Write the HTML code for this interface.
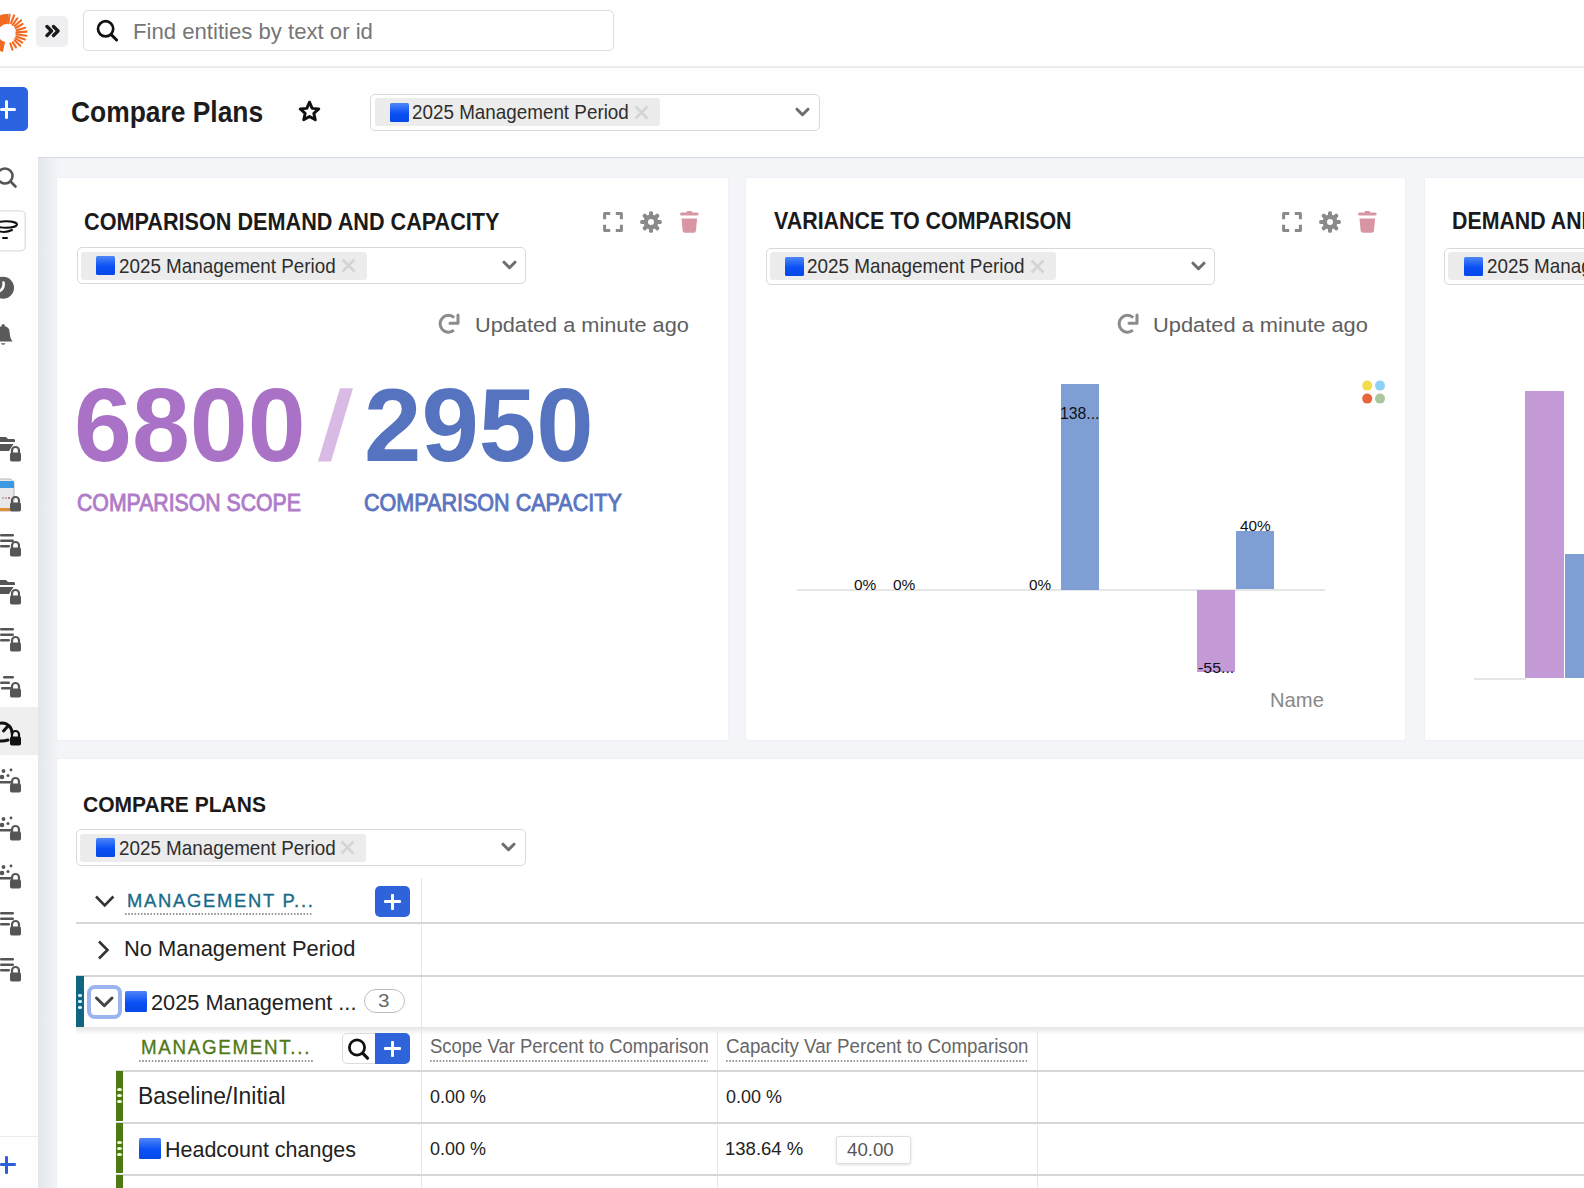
<!DOCTYPE html>
<html><head><meta charset="utf-8">
<style>
*{box-sizing:border-box;margin:0;padding:0}
html,body{width:1584px;height:1188px;overflow:hidden;background:#fefefe;font-family:"Liberation Sans",sans-serif;color:#222;position:relative}
.abs{position:absolute}
.t{position:absolute;white-space:nowrap;line-height:1;transform-origin:0 0;z-index:5}
#texts{position:absolute;left:0;top:0;width:1584px;height:1188px;z-index:5}
#topbar{position:absolute;left:0;top:0;width:1584px;height:68px;border-bottom:2px solid #ececec;background:#fefefe}
#side{position:absolute;left:0;top:68px;width:38px;height:1120px;background:#fefefe}
#content{position:absolute;left:38px;top:157px;width:1546px;height:1031px;background:#f4f5f9;border-top:1px solid #d3d9e1;overflow:hidden}
#content:before{content:"";position:absolute;left:0;top:0;width:19px;height:100%;background:linear-gradient(to right,#e3e7eb,#f2f3f7)}
.card{position:absolute;background:#fff;border-radius:2px;box-shadow:0 0 2px rgba(200,205,215,0.35)}
.dd{position:absolute;border:1.5px solid #d9d9d9;border-radius:5px;background:#fff}
.tag{position:absolute;background:#ececec;border-radius:3px}
.sq{position:absolute;width:19px;height:19px;background:linear-gradient(#4f86f7,#0a50f5 55%,#0648e8);border-radius:1.5px}
.hline{position:absolute;height:2px;background:#d6d6d6}
.vline{position:absolute;width:1px;background:#e6e6e6}

</style></head><body>
<div id="topbar"></div>
<!-- logo -->
<svg class="abs" style="left:0;top:0" width="30" height="60" viewBox="0 0 30 60">
  <g fill="none" stroke="#f26a21">
  <path d="M-7 33 A14 14 0 0 1 8 19" stroke-width="10"/>
  <path d="M-7 33 A14 14 0 0 0 4 47" stroke-width="10"/>
  <g stroke-width="2.1" stroke-linecap="round"><line x1="8.39" y1="23.10" x2="9.57" y2="14.68"/><line x1="10.93" y1="23.26" x2="14.12" y2="15.38"/><line x1="12.74" y1="24.81" x2="17.32" y2="18.26"/><line x1="14.80" y1="25.97" x2="21.12" y2="20.29"/><line x1="15.66" y1="28.00" x2="22.59" y2="24.00"/><line x1="16.61" y1="30.24" x2="25.26" y2="27.76"/><line x1="16.48" y1="32.34" x2="26.45" y2="31.64"/><line x1="16.41" y1="34.32" x2="26.31" y2="35.71"/><line x1="16.40" y1="36.42" x2="24.85" y2="39.50"/><line x1="15.48" y1="38.30" x2="22.26" y2="42.54"/><line x1="14.55" y1="40.29" x2="20.31" y2="45.85"/><line x1="12.83" y1="42.33" x2="16.01" y2="47.42"/><line x1="10.40" y1="43.46" x2="12.41" y2="49.64"/></g>
  </g>
</svg>
<div class="abs" style="left:36px;top:16px;width:32px;height:31px;background:#efeff1;border-radius:5px"></div>
<svg class="abs" style="left:45px;top:24px" width="16" height="14" viewBox="0 0 16 14">
  <path d="M2 2.5 L6.5 7 L2 11.5 M8.5 2.5 L13 7 L8.5 11.5" fill="none" stroke="#1a1a1a" stroke-width="3.3" stroke-linecap="round" stroke-linejoin="round"/>
</svg>
<div class="abs" style="left:83px;top:10px;width:531px;height:41px;border:1.5px solid #dcdcdc;border-radius:5px;background:#fff"></div>
<svg class="abs" style="left:95px;top:18px" width="26" height="26" viewBox="0 0 26 26">
  <circle cx="10.6" cy="10.8" r="7.6" fill="none" stroke="#111" stroke-width="2.7"/>
  <line x1="16.2" y1="16.6" x2="21.6" y2="22" stroke="#111" stroke-width="3" stroke-linecap="round"/>
</svg>

<!-- sidebar -->
<div id="side"></div>
<div class="abs" style="left:0;top:87px;width:28.3px;height:43.8px;background:#2a64e0;border-radius:0 5px 5px 0"></div>
<div class="abs" style="left:4.8px;top:99.7px;width:3px;height:19px;background:#fff;border-radius:1.5px"></div>
<div class="abs" style="left:0;top:107.5px;width:15.7px;height:3px;background:#fff;border-radius:1.5px"></div>
<svg class="abs" style="left:0;top:160px" width="38" height="880" viewBox="0 0 38 880">
  <g fill="none" stroke="#555" stroke-width="2.6" stroke-linecap="round">
    <!-- search -->
    <circle cx="5" cy="16" r="7.5"/>
    <line x1="10.5" y1="21.5" x2="15.5" y2="26.5"/>
  </g>
  <!-- tornado box -->
  <rect x="-6" y="50.8" width="31.3" height="40" rx="4.5" fill="none" stroke="#dedede" stroke-width="1.3"/>
  <g fill="none" stroke="#111" stroke-width="2" stroke-linecap="round">
    <ellipse cx="6" cy="64.5" rx="11" ry="3.2"/>
    <path d="M-3 70.5 Q5 73.5 12 70"/>
    <path d="M3 78 H7"/>
  </g>
  <!-- clock -->
  <circle cx="3" cy="127.7" r="11" fill="#5a5a5a"/>
  <path d="M3.5 122.5 Q4.5 128 0 131" fill="none" stroke="#fff" stroke-width="2.5" stroke-linecap="round"/>
  <!-- bell -->
  <path d="M-6.3 181.6 Q-3.5 178.5 -3.2 172 Q-3 166.5 3.2 166 Q9.4 166.5 9.6 172 Q9.9 178.5 12.6 181.6 Z" fill="#5a5a5a"/>
  <circle cx="3.2" cy="165.6" r="1.6" fill="#5a5a5a"/>
  <path d="M0.8 183.2 H5.6 Q3.2 186.5 0.8 183.2 Z" fill="#5a5a5a"/>
</svg>
<!-- locked icons -->
<svg class="abs" style="left:0;top:420px" width="38" height="580" viewBox="0 0 38 580">
  <defs>
    <g id="lock"><path d="M-3.5 0 V-2.5 A3.5 3.5 0 0 1 3.5 -2.5 V0" fill="none" stroke="#555" stroke-width="2.2"/><rect x="-5.5" y="-0.5" width="11" height="9" rx="1.8" fill="#555"/></g>
    <g id="folder"><path d="M0 0 H6 L8 2 H14 Q15 2 15 3.5 V5 H0 Z M0 7 H13.5 L9 14 H0 Z" fill="#555"/></g>
    <g id="list"><rect x="0" y="0" width="14" height="2.6" rx="1.3" fill="#555"/><rect x="0" y="5.5" width="14" height="2.6" rx="1.3" fill="#555"/><rect x="0" y="11" width="10" height="2.6" rx="1.3" fill="#555"/></g>
    <g id="scatter"><circle cx="3" cy="2" r="2" fill="#555"/><circle cx="11" cy="1.2" r="1.6" fill="#555"/><circle cx="1.5" cy="8" r="2.4" fill="#555"/><circle cx="7.5" cy="6.5" r="1.6" fill="#555"/><rect x="0" y="12" width="14" height="2.4" rx="1.2" fill="#555"/></g>
  </defs>
  <use href="#folder" x="0" y="17"/><use href="#lock" x="15.5" y="33"/>
  <!-- calendar emoji -->
  <rect x="-4" y="59" width="18" height="32" rx="5" fill="#e8e8ea" stroke="#b8b8bc" stroke-width="1"/>
  <rect x="-4" y="61" width="18" height="7" fill="#3d9ae0"/>
  <rect x="-4" y="88" width="18" height="3" fill="#e09030"/>
  <circle cx="3" cy="78" r="0.8" fill="#777"/><circle cx="6" cy="78" r="0.8" fill="#777"/><circle cx="9" cy="78" r="0.9" fill="#c33"/>
  <use href="#lock" x="15.5" y="83"/>
  <use href="#list" x="0" y="114"/><use href="#lock" x="15.5" y="128"/>
  <use href="#folder" x="0" y="160"/><use href="#lock" x="15.5" y="176"/>
  <use href="#list" x="0" y="208"/><use href="#lock" x="15.5" y="223"/>
  <g transform="translate(1 256)"><rect x="2" y="0" width="11" height="2.6" rx="1.3" fill="#555"/><rect x="-1" y="5.5" width="10" height="2.6" rx="1.3" fill="#555"/><rect x="0" y="11" width="11" height="2.6" rx="1.3" fill="#555"/></g><use href="#lock" x="15.5" y="269"/>
</svg>
<div class="abs" style="left:0;top:706.7px;width:38px;height:48px;background:#efeff0"></div>
<svg class="abs" style="left:0;top:700px" width="38" height="300" viewBox="0 0 38 300">
  <defs>
    <g id="lock2"><path d="M-3.5 0 V-2.5 A3.5 3.5 0 0 1 3.5 -2.5 V0" fill="none" stroke="#555" stroke-width="2.2"/><rect x="-5.5" y="-0.5" width="11" height="9" rx="1.8" fill="#555"/></g>
    <g id="scat"><circle cx="3.5" cy="2" r="1.9" fill="#555"/><circle cx="11" cy="1" r="1.4" fill="#555"/><circle cx="2" cy="8" r="2.3" fill="#555"/><circle cx="8" cy="6.5" r="1.5" fill="#555"/><rect x="-2" y="12" width="14" height="2.4" rx="1.2" fill="#555"/></g>
    <g id="lst"><rect x="0" y="0" width="14" height="2.6" rx="1.3" fill="#555"/><rect x="0" y="5.5" width="14" height="2.6" rx="1.3" fill="#555"/><rect x="0" y="11" width="10" height="2.6" rx="1.3" fill="#555"/></g>
  </defs>
  <!-- gauge -->
  <path d="M-8 36 A 10 10 0 1 1 12 36" fill="none" stroke="#111" stroke-width="3" stroke-linecap="round" transform="translate(0 -3)"/>
  <path d="M-4 40 Q2 42 8 40" fill="none" stroke="#111" stroke-width="3" stroke-linecap="round"/>
  <path d="M3.5 31 L8 26" stroke="#111" stroke-width="3" stroke-linecap="round"/>
  <g><path d="M-3.5 0 V-2.5 A3.5 3.5 0 0 1 3.5 -2.5 V0" fill="none" stroke="#111" stroke-width="2.2" transform="translate(15.5 37)"/><rect x="10" y="36.5" width="11" height="9" rx="1.8" fill="#111"/></g>
  <use href="#scat" x="0" y="69"/><use href="#lock2" x="15.5" y="84"/>
  <use href="#scat" x="0" y="117"/><use href="#lock2" x="15.5" y="132"/>
  <use href="#scat" x="0" y="165"/><use href="#lock2" x="15.5" y="180"/>
  <use href="#lst" x="0" y="212"/><use href="#lock2" x="15.5" y="227"/>
  <use href="#lst" x="0" y="258"/><use href="#lock2" x="15.5" y="273"/>
</svg>
<div class="abs" style="left:0;top:1135.5px;width:38px;height:1.5px;background:#ececec"></div>
<div class="abs" style="left:5px;top:1155.5px;width:2.6px;height:18px;background:#2b5fd9;border-radius:1.3px"></div>
<div class="abs" style="left:0;top:1163px;width:15.5px;height:2.6px;background:#2b5fd9;border-radius:1.3px"></div>

<!-- header -->
<svg class="abs" style="left:298px;top:100px" width="24" height="24" viewBox="0 0 24 24">
  <path d="M11.5 2.2 L14.2 8.4 L20.8 8.9 L15.8 13.3 L17.3 19.8 L11.5 16.4 L5.7 19.8 L7.2 13.3 L2.2 8.9 L8.8 8.4 Z" fill="none" stroke="#111" stroke-width="2.9" stroke-linejoin="round"/>
</svg>
<div class="dd" style="left:370px;top:94px;width:450px;height:37px"></div>
<div class="tag" style="left:374.5px;top:98px;width:285.5px;height:28px"></div>
<div class="sq" style="left:389.7px;top:103px"></div>
<svg class="abs" style="left:633px;top:104px" width="17" height="17" viewBox="0 0 17 17"><path d="M2.5 2.5 L14.5 14.5 M14.5 2.5 L2.5 14.5" stroke="#d4d4d4" stroke-width="2.6"/></svg>
<svg class="abs" style="left:795px;top:107px" width="15" height="11" viewBox="0 0 15 11"><path d="M2 2.2 L7.5 7.7 L13 2.2" fill="none" stroke="#6e6e6e" stroke-width="3" stroke-linecap="round" stroke-linejoin="round"/></svg>

<!-- content -->
<div id="content"></div>
<div class="card" style="left:57px;top:178px;width:671px;height:562px"></div>
<div class="card" style="left:746px;top:178px;width:659px;height:562px"></div>
<div class="card" style="left:1425px;top:178px;width:170px;height:562px"></div>
<div class="card" style="left:57px;top:759px;width:1540px;height:440px"></div>

<!-- card content -->

<svg class="abs" style="left:603px;top:211.5px" width="20" height="20" viewBox="0 0 20 20"><path d="M1.6 7.2 V1.6 H7.2 M12.8 1.6 H18.4 V7.2 M18.4 12.8 V18.4 H12.8 M7.2 18.4 H1.6 V12.8" fill="none" stroke="#8a8a8a" stroke-width="3" stroke-linejoin="round"/></svg>
<svg class="abs" style="left:640px;top:210.5px" width="22" height="22" viewBox="0 0 22 22"><g fill="#8a8a8a"><circle cx="11" cy="11" r="7.4"/><rect x="9" y="0.2" width="4" height="6" rx="1.6" transform="rotate(0 11 11)"/><rect x="9" y="0.2" width="4" height="6" rx="1.6" transform="rotate(45 11 11)"/><rect x="9" y="0.2" width="4" height="6" rx="1.6" transform="rotate(90 11 11)"/><rect x="9" y="0.2" width="4" height="6" rx="1.6" transform="rotate(135 11 11)"/><rect x="9" y="0.2" width="4" height="6" rx="1.6" transform="rotate(180 11 11)"/><rect x="9" y="0.2" width="4" height="6" rx="1.6" transform="rotate(225 11 11)"/><rect x="9" y="0.2" width="4" height="6" rx="1.6" transform="rotate(270 11 11)"/><rect x="9" y="0.2" width="4" height="6" rx="1.6" transform="rotate(315 11 11)"/></g><circle cx="11" cy="11" r="3" fill="#fff"/></svg>
<svg class="abs" style="left:679.5px;top:210.5px" width="19" height="22" viewBox="0 0 19 22"><g fill="#d896a4"><rect x="0" y="1.6" width="18.6" height="3" rx="1.5"/><rect x="6.5" y="0" width="5.6" height="3" rx="1.2"/><path d="M1.5 7.5 H17.1 L16 19.5 Q15.8 21.8 13.5 21.8 H5.1 Q2.8 21.8 2.6 19.5 Z"/></g></svg>
<svg class="abs" style="left:436px;top:312px" width="24" height="24" viewBox="0 0 24 24"><path d="M18.2 5.6 A8.4 8.4 0 1 0 17.9 18.2" fill="none" stroke="#8c8c8c" stroke-width="3"/><path d="M14 11.2 H22 V3" fill="none" stroke="#8c8c8c" stroke-width="3" stroke-linecap="round" stroke-linejoin="round"/></svg>

<svg class="abs" style="left:1281.5px;top:211.5px" width="20" height="20" viewBox="0 0 20 20"><path d="M1.6 7.2 V1.6 H7.2 M12.8 1.6 H18.4 V7.2 M18.4 12.8 V18.4 H12.8 M7.2 18.4 H1.6 V12.8" fill="none" stroke="#8a8a8a" stroke-width="3" stroke-linejoin="round"/></svg>
<svg class="abs" style="left:1318.5px;top:210.5px" width="22" height="22" viewBox="0 0 22 22"><g fill="#8a8a8a"><circle cx="11" cy="11" r="7.4"/><rect x="9" y="0.2" width="4" height="6" rx="1.6" transform="rotate(0 11 11)"/><rect x="9" y="0.2" width="4" height="6" rx="1.6" transform="rotate(45 11 11)"/><rect x="9" y="0.2" width="4" height="6" rx="1.6" transform="rotate(90 11 11)"/><rect x="9" y="0.2" width="4" height="6" rx="1.6" transform="rotate(135 11 11)"/><rect x="9" y="0.2" width="4" height="6" rx="1.6" transform="rotate(180 11 11)"/><rect x="9" y="0.2" width="4" height="6" rx="1.6" transform="rotate(225 11 11)"/><rect x="9" y="0.2" width="4" height="6" rx="1.6" transform="rotate(270 11 11)"/><rect x="9" y="0.2" width="4" height="6" rx="1.6" transform="rotate(315 11 11)"/></g><circle cx="11" cy="11" r="3" fill="#fff"/></svg>
<svg class="abs" style="left:1358.0px;top:210.5px" width="19" height="22" viewBox="0 0 19 22"><g fill="#d896a4"><rect x="0" y="1.6" width="18.6" height="3" rx="1.5"/><rect x="6.5" y="0" width="5.6" height="3" rx="1.2"/><path d="M1.5 7.5 H17.1 L16 19.5 Q15.8 21.8 13.5 21.8 H5.1 Q2.8 21.8 2.6 19.5 Z"/></g></svg>
<svg class="abs" style="left:1114.5px;top:312px" width="24" height="24" viewBox="0 0 24 24"><path d="M18.2 5.6 A8.4 8.4 0 1 0 17.9 18.2" fill="none" stroke="#8c8c8c" stroke-width="3"/><path d="M14 11.2 H22 V3" fill="none" stroke="#8c8c8c" stroke-width="3" stroke-linecap="round" stroke-linejoin="round"/></svg>

<div class="dd" style="left:76.7px;top:247.2px;width:449.5px;height:37px"></div>
<div class="tag" style="left:80.7px;top:251.7px;width:286px;height:28px"></div>
<div class="sq" style="left:96.2px;top:256.2px"></div>
<svg class="abs" style="left:339.7px;top:257.2px" width="17" height="17" viewBox="0 0 17 17"><path d="M2.5 2.5 L14.5 14.5 M14.5 2.5 L2.5 14.5" stroke="#d4d4d4" stroke-width="2.6"/></svg>
<svg class="abs" style="left:501.7px;top:260.2px" width="15" height="11" viewBox="0 0 15 11"><path d="M2 2.2 L7.5 7.7 L13 2.2" fill="none" stroke="#6e6e6e" stroke-width="3" stroke-linecap="round" stroke-linejoin="round"/></svg>

<div class="dd" style="left:765.8px;top:247.5px;width:449px;height:37px"></div>
<div class="tag" style="left:769.8px;top:252.0px;width:286px;height:28px"></div>
<div class="sq" style="left:785.3px;top:256.5px"></div>
<svg class="abs" style="left:1028.8px;top:257.5px" width="17" height="17" viewBox="0 0 17 17"><path d="M2.5 2.5 L14.5 14.5 M14.5 2.5 L2.5 14.5" stroke="#d4d4d4" stroke-width="2.6"/></svg>
<svg class="abs" style="left:1190.8px;top:260.5px" width="15" height="11" viewBox="0 0 15 11"><path d="M2 2.2 L7.5 7.7 L13 2.2" fill="none" stroke="#6e6e6e" stroke-width="3" stroke-linecap="round" stroke-linejoin="round"/></svg>

<div class="dd" style="left:1444.3px;top:247.5px;width:449px;height:37px"></div>
<div class="tag" style="left:1448.3px;top:252.0px;width:286px;height:28px"></div>
<div class="sq" style="left:1463.8px;top:256.5px"></div>
<svg class="abs" style="left:1707.3px;top:257.5px" width="17" height="17" viewBox="0 0 17 17"><path d="M2.5 2.5 L14.5 14.5 M14.5 2.5 L2.5 14.5" stroke="#d4d4d4" stroke-width="2.6"/></svg>
<svg class="abs" style="left:1869.3px;top:260.5px" width="15" height="11" viewBox="0 0 15 11"><path d="M2 2.2 L7.5 7.7 L13 2.2" fill="none" stroke="#6e6e6e" stroke-width="3" stroke-linecap="round" stroke-linejoin="round"/></svg>

<div class="dd" style="left:76.3px;top:829px;width:449.5px;height:37px"></div>
<div class="tag" style="left:80.3px;top:833.5px;width:286px;height:28px"></div>
<div class="sq" style="left:95.8px;top:838px"></div>
<svg class="abs" style="left:339.3px;top:839px" width="17" height="17" viewBox="0 0 17 17"><path d="M2.5 2.5 L14.5 14.5 M14.5 2.5 L2.5 14.5" stroke="#d4d4d4" stroke-width="2.6"/></svg>
<svg class="abs" style="left:501.3px;top:842px" width="15" height="11" viewBox="0 0 15 11"><path d="M2 2.2 L7.5 7.7 L13 2.2" fill="none" stroke="#6e6e6e" stroke-width="3" stroke-linecap="round" stroke-linejoin="round"/></svg>
<svg class="abs" style="left:316px;top:386px" width="40" height="78" viewBox="0 0 40 78"><path d="M2 75.5 L15 75.5 L37 2.3 L24 2.3 Z" fill="#d9bae5"/></svg>

<div class="abs" style="left:797px;top:589px;width:528px;height:2px;background:#e6e6e6"></div>
<div class="abs" style="left:1060.8px;top:383.5px;width:38px;height:206px;background:#7f9fd4"></div>
<div class="abs" style="left:1197.2px;top:589.5px;width:38.3px;height:82.5px;background:#c39ad6"></div>
<div class="abs" style="left:1236px;top:530.6px;width:38.4px;height:58.9px;background:#7f9fd4"></div>
<svg class="abs" style="left:1360px;top:378px" width="28" height="28" viewBox="0 0 28 28">
<circle cx="7.2" cy="7.6" r="5" fill="#f1dd4c"/><circle cx="20" cy="7.6" r="5" fill="#8fd0f6"/>
<circle cx="7.2" cy="20.6" r="5" fill="#e8643c"/><circle cx="20" cy="20.6" r="5" fill="#a9c69c"/></svg>
<!-- card 3 chart -->
<div class="abs" style="left:1474px;top:677.5px;width:52px;height:2px;background:#e6e6e6"></div>
<div class="abs" style="left:1525px;top:391.2px;width:38.7px;height:287px;background:#c39ad6"></div>
<div class="abs" style="left:1565.3px;top:554px;width:40px;height:124px;background:#7f9fd4"></div>

<!-- header row -->
<svg class="abs" style="left:93px;top:893px" width="24" height="16" viewBox="0 0 24 16"><path d="M3 3.5 L11.7 12.3 L20.4 3.5" fill="none" stroke="#333" stroke-width="2.6"/></svg>
<div class="abs" style="left:125px;top:912.5px;width:188px;height:2px;background-image:linear-gradient(to right,#9a9a9a 50%,transparent 50%);background-size:3.2px 2px"></div>
<div class="abs" style="left:375px;top:886px;width:34.6px;height:31.2px;background:#2f63d9;border-radius:5px"></div>
<div class="abs" style="left:390.6px;top:893.5px;width:3.4px;height:16.5px;background:#fff;border-radius:1px"></div>
<div class="abs" style="left:384px;top:900px;width:16.6px;height:3.4px;background:#fff;border-radius:1px"></div>
<div class="vline" style="left:421px;top:878px;height:310px"></div>
<div class="hline" style="left:76px;top:922px;width:1520px"></div>
<!-- no mgmt row -->
<svg class="abs" style="left:95px;top:939px" width="18" height="22" viewBox="0 0 18 22"><path d="M4 2.5 L12.5 11 L4 19.5" fill="none" stroke="#333" stroke-width="2.6"/></svg>
<div class="hline" style="left:76px;top:974.5px;width:1520px"></div>
<!-- 2025 row -->
<div class="abs" style="left:76px;top:976px;width:8px;height:50.6px;background:#106585"></div>
<div class="abs" style="left:77.5px;top:993.5px;width:4.7px;height:3px;background:#dff6fb;border-radius:50%"></div><div class="abs" style="left:77.5px;top:999.7px;width:4.7px;height:3px;background:#dff6fb;border-radius:50%"></div><div class="abs" style="left:77.5px;top:1005.9px;width:4.7px;height:3px;background:#dff6fb;border-radius:50%"></div>
<div class="abs" style="left:87.1px;top:984.7px;width:34.8px;height:34.5px;border:4px solid #9bb3ee;border-radius:8px;background:#fff"></div>
<svg class="abs" style="left:93px;top:994px" width="22" height="16" viewBox="0 0 22 16"><path d="M3.5 4 L11.3 11.7 L19 4" fill="none" stroke="#444" stroke-width="3" stroke-linecap="round" stroke-linejoin="round"/></svg>
<div class="sq" style="left:125.3px;top:990.7px;width:21.5px;height:21.5px"></div>
<div class="abs" style="left:364.2px;top:989.2px;width:40.6px;height:24px;border:1.5px solid #bdbdbd;border-radius:12px"></div>
<div class="abs" style="left:76px;top:1026.6px;width:1520px;height:8px;background:linear-gradient(#e4e4e4,rgba(255,255,255,0))"></div>
<!-- sub header -->
<div class="abs" style="left:139px;top:1060px;width:174px;height:2px;background-image:linear-gradient(to right,#9a9a9a 50%,transparent 50%);background-size:3.2px 2px"></div>
<div class="abs" style="left:430px;top:1060px;width:278px;height:2px;background-image:linear-gradient(to right,#9a9a9a 50%,transparent 50%);background-size:3.2px 2px"></div>
<div class="abs" style="left:726px;top:1060px;width:301px;height:2px;background-image:linear-gradient(to right,#9a9a9a 50%,transparent 50%);background-size:3.2px 2px"></div>
<div class="abs" style="left:342.3px;top:1033.3px;width:67.2px;height:31.2px;border:1.3px solid #dcdcdc;border-radius:5px;background:#fff"></div>
<svg class="abs" style="left:345px;top:1036px" width="28" height="26" viewBox="0 0 28 26"><circle cx="12" cy="11.5" r="7.6" fill="none" stroke="#111" stroke-width="2.8"/><line x1="17.6" y1="17.2" x2="22.5" y2="22.2" stroke="#111" stroke-width="3.2" stroke-linecap="round"/></svg>
<div class="abs" style="left:375px;top:1033.3px;width:34.5px;height:31.2px;background:#2f63d9;border-radius:0 5px 5px 0"></div>
<div class="abs" style="left:390.6px;top:1040.5px;width:3.4px;height:16.5px;background:#fff;border-radius:1px"></div>
<div class="abs" style="left:384px;top:1047px;width:16.6px;height:3.4px;background:#fff;border-radius:1px"></div>
<div class="vline" style="left:717px;top:1030px;height:160px"></div>
<div class="vline" style="left:1036.5px;top:1030px;height:160px"></div>
<div class="hline" style="left:116px;top:1069.5px;width:1480px"></div>
<div class="hline" style="left:116px;top:1121.5px;width:1480px"></div>
<div class="hline" style="left:116px;top:1173.5px;width:1480px"></div>
<!-- green bars -->
<div class="abs" style="left:115.6px;top:1071px;width:7.7px;height:50px;background:#4e7a12"></div>
<div class="abs" style="left:115.6px;top:1123px;width:7.7px;height:50px;background:#4e7a12"></div>
<div class="abs" style="left:115.6px;top:1175px;width:7.7px;height:20px;background:#4e7a12"></div>
<div class="abs" style="left:117.1px;top:1088px;width:4.7px;height:3px;background:#f4ffe6;border-radius:50%"></div><div class="abs" style="left:117.1px;top:1094px;width:4.7px;height:3px;background:#f4ffe6;border-radius:50%"></div><div class="abs" style="left:117.1px;top:1100px;width:4.7px;height:3px;background:#f4ffe6;border-radius:50%"></div><div class="abs" style="left:117.1px;top:1140.5px;width:4.7px;height:3px;background:#f4ffe6;border-radius:50%"></div><div class="abs" style="left:117.1px;top:1146.5px;width:4.7px;height:3px;background:#f4ffe6;border-radius:50%"></div><div class="abs" style="left:117.1px;top:1152.5px;width:4.7px;height:3px;background:#f4ffe6;border-radius:50%"></div>
<div class="sq" style="left:139px;top:1137.9px;width:22px;height:21.5px"></div>
<div class="abs" style="left:836.3px;top:1136px;width:74.7px;height:28.2px;border:1px solid #dedede;border-radius:3px;background:#fff;box-shadow:0 1px 3px rgba(0,0,0,0.12)"></div>

<div id="texts">
<div class="t" style="left:133.27px;top:20.08px;font-size:22.82px;font-weight:normal;color:#767676;transform:scaleX(0.9703);letter-spacing:0px;">Find entities by text or id</div>
<div class="t" style="left:70.88px;top:98.39px;font-size:29.07px;font-weight:bold;color:#1c1c1c;transform:scaleX(0.9081);letter-spacing:0px;">Compare Plans</div>
<div class="t" style="left:412.12px;top:102.32px;font-size:20.64px;font-weight:normal;color:#2e2e2e;transform:scaleX(0.9134);letter-spacing:0px;">2025 Management Period</div>
<div class="t" style="left:83.52px;top:210.51px;font-size:23.26px;font-weight:bold;color:#1a1a1a;transform:scaleX(0.9306);letter-spacing:0px;">COMPARISON DEMAND AND CAPACITY</div>
<div class="t" style="left:119.32px;top:255.82px;font-size:20.06px;font-weight:normal;color:#2e2e2e;transform:scaleX(0.9390);letter-spacing:0px;">2025 Management Period</div>
<div class="t" style="left:475.04px;top:313.96px;font-size:21.08px;font-weight:normal;color:#5e5e5e;transform:scaleX(1.0311);letter-spacing:0px;">Updated a minute ago</div>
<div class="t" style="left:74.35px;top:373.96px;font-size:103.39px;font-weight:bold;color:#a972c7;transform:scaleX(1.0068);letter-spacing:0px;">6800</div>
<div class="t" style="left:363.57px;top:373.96px;font-size:103.39px;font-weight:bold;color:#5673c0;transform:scaleX(0.9983);letter-spacing:0px;">2950</div>
<div class="t" style="left:76.60px;top:490.69px;font-size:23.98px;font-weight:normal;color:#b07bc9;transform:scaleX(0.8866);letter-spacing:0px;-webkit-text-stroke:0.9px #b07bc9;">COMPARISON SCOPE</div>
<div class="t" style="left:363.59px;top:490.69px;font-size:23.98px;font-weight:normal;color:#5a75c0;transform:scaleX(0.8990);letter-spacing:0px;-webkit-text-stroke:0.9px #5a75c0;">COMPARISON CAPACITY</div>
<div class="t" style="left:773.50px;top:209.94px;font-size:23.69px;font-weight:bold;color:#1a1a1a;transform:scaleX(0.9044);letter-spacing:0px;">VARIANCE TO COMPARISON</div>
<div class="t" style="left:806.91px;top:255.82px;font-size:20.06px;font-weight:normal;color:#2e2e2e;transform:scaleX(0.9425);letter-spacing:0px;">2025 Management Period</div>
<div class="t" style="left:1152.94px;top:313.96px;font-size:21.08px;font-weight:normal;color:#5e5e5e;transform:scaleX(1.0360);letter-spacing:0px;">Updated a minute ago</div>
<div class="t" style="left:1060.02px;top:405.25px;font-size:16.24px;font-weight:normal;color:#111;transform:scaleX(0.9697);letter-spacing:0px;">138...</div>
<div class="t" style="left:853.52px;top:577.96px;font-size:14.69px;font-weight:normal;color:#111;transform:scaleX(1.0524);letter-spacing:0px;">0%</div>
<div class="t" style="left:892.52px;top:577.96px;font-size:14.69px;font-weight:normal;color:#111;transform:scaleX(1.0524);letter-spacing:0px;">0%</div>
<div class="t" style="left:1029.12px;top:577.96px;font-size:14.69px;font-weight:normal;color:#111;transform:scaleX(1.0426);letter-spacing:0px;">0%</div>
<div class="t" style="left:1239.76px;top:518.82px;font-size:14.97px;font-weight:normal;color:#111;transform:scaleX(1.0244);letter-spacing:0px;">40%</div>
<div class="t" style="left:1198.20px;top:659.85px;font-size:15.54px;font-weight:normal;color:#111;transform:scaleX(1.0234);letter-spacing:0px;">-55...</div>
<div class="t" style="left:1269.92px;top:689.92px;font-size:20.64px;font-weight:normal;color:#888;transform:scaleX(0.9790);letter-spacing:0px;">Name</div>
<div class="t" style="left:1451.57px;top:210.33px;font-size:23.11px;font-weight:bold;color:#1a1a1a;transform:scaleX(0.9232);letter-spacing:0px;">DEMAND AND CAPACITY</div>
<div class="t" style="left:1486.92px;top:255.82px;font-size:20.06px;font-weight:normal;color:#2e2e2e;transform:scaleX(0.9390);letter-spacing:0px;">2025 Management Period</div>
<div class="t" style="left:83.34px;top:793.20px;font-size:22.67px;font-weight:bold;color:#1a1a1a;transform:scaleX(0.9278);letter-spacing:0px;">COMPARE PLANS</div>
<div class="t" style="left:119.32px;top:837.62px;font-size:20.06px;font-weight:normal;color:#2e2e2e;transform:scaleX(0.9390);letter-spacing:0px;">2025 Management Period</div>
<div class="t" style="left:127.46px;top:890.96px;font-size:19.19px;font-weight:normal;color:#196a88;transform:scaleX(0.9580);letter-spacing:1.8px;-webkit-text-stroke:0.35px #196a88;">MANAGEMENT P...</div>
<div class="t" style="left:123.79px;top:938.42px;font-size:22.53px;font-weight:normal;color:#222;transform:scaleX(0.9727);letter-spacing:0px;">No Management Period</div>
<div class="t" style="left:151.38px;top:991.10px;font-size:22.67px;font-weight:normal;color:#222;transform:scaleX(0.9594);letter-spacing:0px;">2025 Management ...</div>
<div class="t" style="left:378.35px;top:992.45px;font-size:18.36px;font-weight:normal;color:#666;transform:scaleX(1.1244);letter-spacing:0px;">3</div>
<div class="t" style="left:141.23px;top:1037.29px;font-size:20.20px;font-weight:normal;color:#517816;transform:scaleX(0.9308);letter-spacing:1.8px;-webkit-text-stroke:0.35px #517816;">MANAGEMENT...</div>
<div class="t" style="left:430.02px;top:1037.46px;font-size:19.77px;font-weight:normal;color:#666;transform:scaleX(0.9341);letter-spacing:0px;">Scope Var Percent to Comparison</div>
<div class="t" style="left:725.52px;top:1037.46px;font-size:19.77px;font-weight:normal;color:#666;transform:scaleX(0.9473);letter-spacing:0px;">Capacity Var Percent to Comparison</div>
<div class="t" style="left:137.81px;top:1085.26px;font-size:23.55px;font-weight:normal;color:#222;transform:scaleX(0.9728);letter-spacing:0px;">Baseline/Initial</div>
<div class="t" style="left:165.02px;top:1137.60px;font-size:22.67px;font-weight:normal;color:#222;transform:scaleX(0.9477);letter-spacing:0px;">Headcount changes</div>
<div class="t" style="left:430.04px;top:1086.86px;font-size:19.07px;font-weight:normal;color:#222;transform:scaleX(0.9416);letter-spacing:0px;">0.00 %</div>
<div class="t" style="left:725.84px;top:1086.86px;font-size:19.07px;font-weight:normal;color:#222;transform:scaleX(0.9416);letter-spacing:0px;">0.00 %</div>
<div class="t" style="left:430.04px;top:1139.36px;font-size:19.07px;font-weight:normal;color:#222;transform:scaleX(0.9416);letter-spacing:0px;">0.00 %</div>
<div class="t" style="left:725.24px;top:1139.36px;font-size:19.07px;font-weight:normal;color:#222;transform:scaleX(0.9719);letter-spacing:0px;">138.64 %</div>
<div class="t" style="left:847.31px;top:1140.95px;font-size:18.36px;font-weight:normal;color:#555;transform:scaleX(1.0176);letter-spacing:0px;">40.00</div>
</div>
</body></html>
